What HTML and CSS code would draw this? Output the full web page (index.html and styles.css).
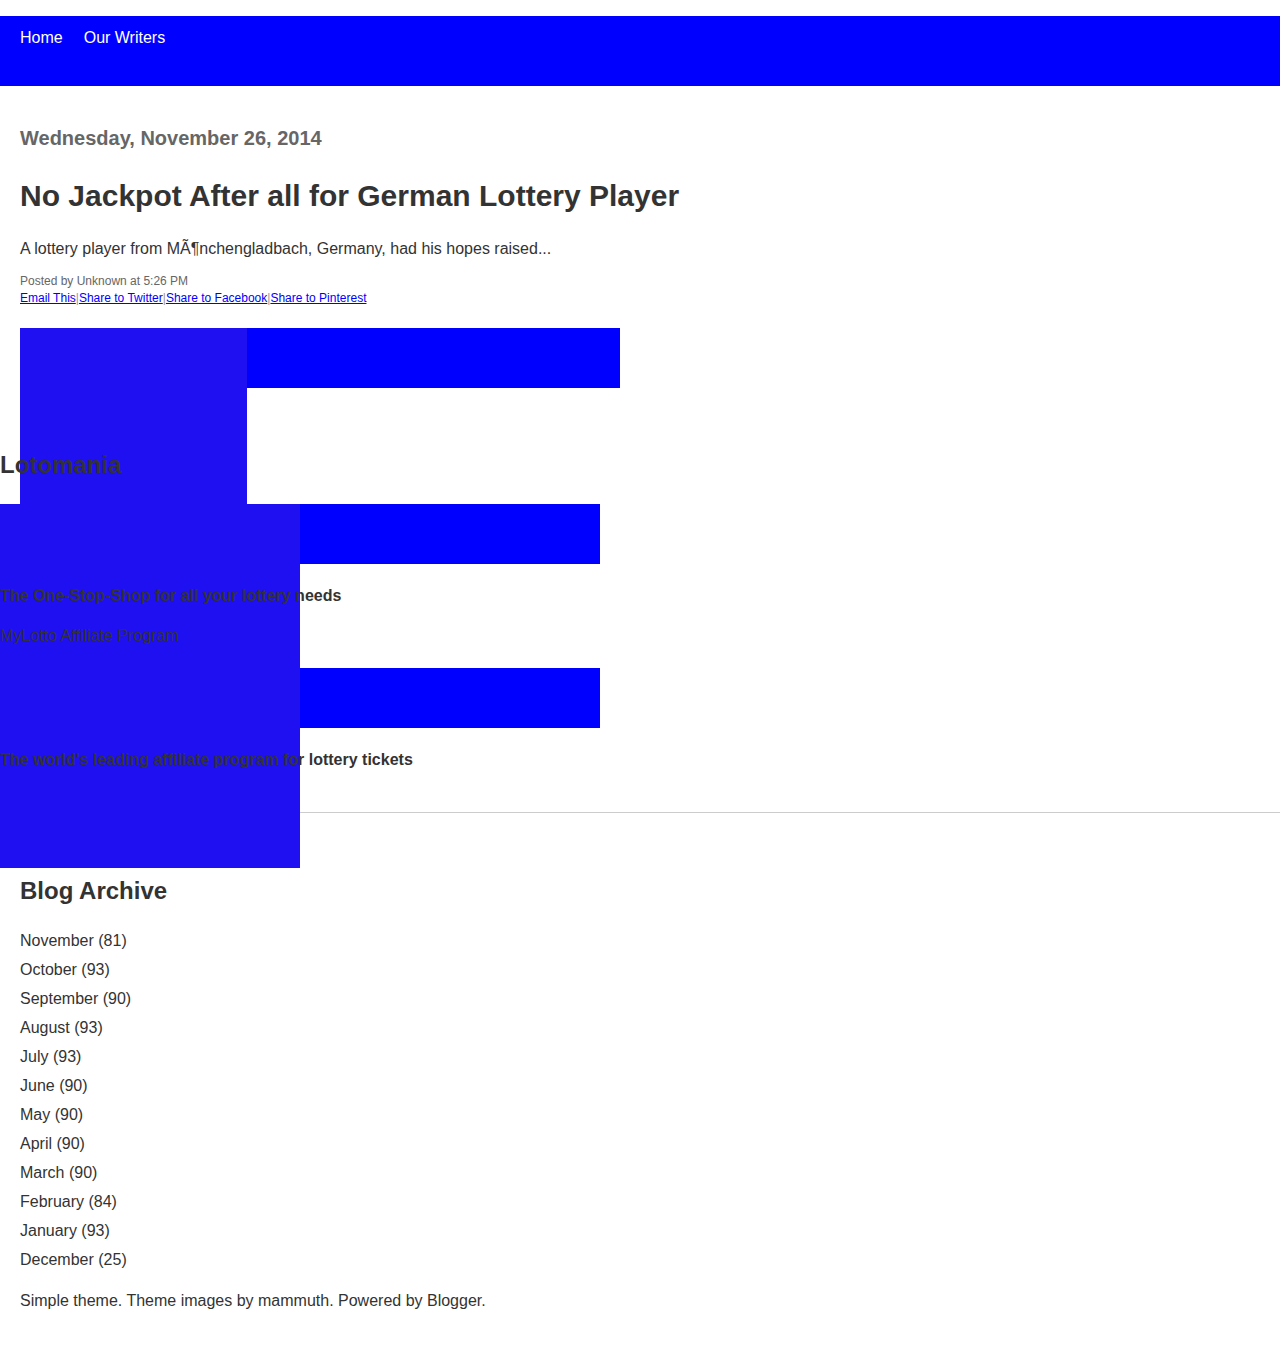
FILE: index.html
```html
<!DOCTYPE html>
<html>
<head>
<meta charset="utf-8">
<link rel="stylesheet" href="styles.css">
</head>
<body>
<div class="overlay overlay-a"></div>
<div class="overlay overlay-b"></div>
<header class="topbar">
  <nav class="nav">
    <a href="#">Home</a>
    <a href="#">Our Writers</a>
  </nav>
</header>
<main class="main">
  <h2 class="date txt">Wednesday, November 26, 2014</h2>
  <h1 class="title txt">No Jackpot After all for German Lottery Player</h1>
  <p class="snippet txt">A lottery player from MÃ¶nchengladbach, Germany, had his hopes raised...</p>
  <div class="posted txt">Posted by Unknown at 5:26 PM</div>
  <div class="share txt"><a href="#">Email This</a><span class="sep">|</span><a href="#">Share to Twitter</a><span class="sep">|</span><a href="#">Share to Facebook</a><span class="sep">|</span><a href="#">Share to Pinterest</a></div>
  <div class="banner banner-main"></div>
</main>
<section class="side">
  <h2 class="side-title txt">Lotomania</h2>
  <div class="banner"></div>
  <p class="side-bold txt first">The One-Stop-Shop for all your lottery needs</p>
  <p class="side-plain txt">MyLotto Affiliate Program</p>
  <div class="banner banner-2"></div>
  <p class="side-bold txt first">The world's leading affiliate program for lottery tickets</p>
</section>
<hr class="rule">
<section class="archive">
  <h2 class="archive-title txt">Blog Archive</h2>
  <ul class="archive-list">
    <li>November (81)</li>
    <li>October (93)</li>
    <li>September (90)</li>
    <li>August (93)</li>
    <li>July (93)</li>
    <li>June (90)</li>
    <li>May (90)</li>
    <li>April (90)</li>
    <li>March (90)</li>
    <li>February (84)</li>
    <li>January (93)</li>
    <li>December (25)</li>
  </ul>
  <p class="footer">Simple theme. Theme images by mammuth. Powered by Blogger.</p>
</section>
</body>
</html>
```
FILE: styles.css
```css
html, body {
  margin: 0;
  padding: 0;
}
body {
  padding-top: 16px;
  font-family: "Liberation Sans", Arial, sans-serif;
  color: #333;
  background: #fff;
  position: relative;
  min-height: 1332px;
}
.overlay {
  position: absolute;
  z-index: 0;
  background: #1e10f0;
}
.overlay-a {
  left: 20px;
  top: 328px;
  width: 227px;
  height: 176px;
}
.overlay-b {
  left: 0;
  top: 504px;
  width: 300px;
  height: 364px;
}
.txt {
  position: relative;
  z-index: 1;
}
.topbar {
  background: #0000ff;
  height: 70px;
  box-sizing: border-box;
  padding: 13px 20px 0;
}
.nav {
  display: flex;
  gap: 21px;
  font-size: 16px;
  line-height: 18px;
}
.nav a {
  color: #fff;
  text-decoration: none;
}
.main {
  padding: 40px 20px 0;
}
.date {
  margin: 0;
  font-size: 20px;
  line-height: 24px;
  font-weight: bold;
  color: #666;
}
.title {
  margin: 28px 0 0;
  font-size: 30px;
  line-height: 36px;
  font-weight: bold;
  color: #333;
}
.snippet {
  margin: 25px 0 0;
  font-size: 16px;
  line-height: 20px;
}
.posted {
  margin-top: 15px;
  font-size: 12px;
  line-height: 14px;
  color: #666;
}
.share {
  margin-top: 3px;
  font-size: 12px;
  line-height: 14px;
}
.share a {
  color: #0000ff;
  text-decoration: underline;
}
.sep {
  color: #999;
}
.banner {
  width: 600px;
  height: 60px;
  background: #0000ff;
}
.banner-main {
  margin-top: 23px;
}
.side {
  padding: 0;
}
.side-title {
  margin: 63px 0 25px;
  font-size: 24px;
  line-height: 28px;
  font-weight: bold;
}
.side-bold {
  margin: 22px 0 0;
  font-size: 16px;
  line-height: 20px;
  font-weight: bold;
}
.side-plain {
  margin: 20px 0 0;
  font-size: 16px;
  line-height: 20px;
}
.banner-2 {
  margin-top: 22px;
}
.rule {
  margin: 42px 0 0;
  border: 0;
  border-top: 1px solid #ccc;
  height: 0;
}
.archive {
  padding: 0 20px;
}
.archive-title {
  margin: 64px 0 0;
  font-size: 24px;
  line-height: 28px;
  font-weight: bold;
}
.archive-list {
  list-style: none;
  margin: 21px 0 0;
  padding: 0;
  font-size: 16px;
  line-height: 29px;
}
.footer {
  margin: 17px 0 0;
  font-size: 16px;
  line-height: 20px;
}
```
